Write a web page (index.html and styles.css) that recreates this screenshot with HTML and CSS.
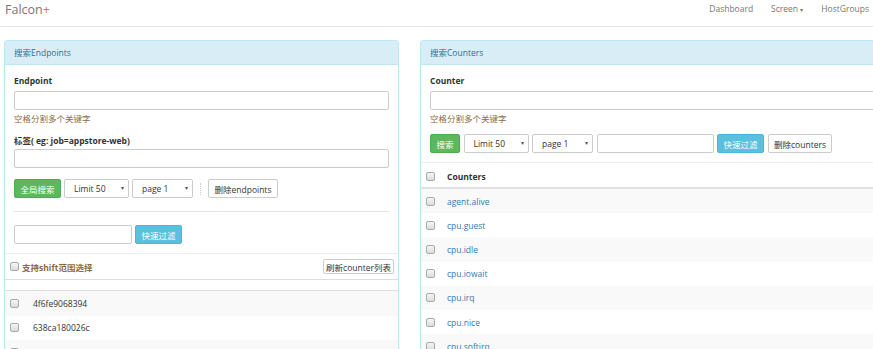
FILE: index.html
```
<!DOCTYPE html>
<html lang="zh">
<head>
    <meta charset="UTF-8">
    <title>Falcon+</title>
    <link rel="stylesheet" href="styles.css">
</head>
<body>
    <div class="navbar">
        <div class="brand">Falcon<span class="plus">+</span></div>
        <div class="nav-links">
            <a>Dashboard</a>
            <a>Screen <span class="caret">&#9662;</span></a>
            <a>HostGroups</a>
        </div>
    </div>

    <div class="main">
        <!-- endpoints -->
        <div class="panel panel-left">
            <div class="panel-heading">搜索Endpoints</div>
            <div class="panel-body">
                <div class="label">Endpoint</div>
                <div class="input"></div>
                <div class="help">空格分割多个关键字</div>
                <div class="label label-tag">标签( eg: job=appstore-web)</div>
                <div class="input"></div>
                <div class="btn-row">
                    <button class="btn btn-success">全局搜索</button>
                    <div class="select">Limit 50<span class="arrow">&#9662;</span></div>
                    <div class="select">page 1<span class="arrow">&#9662;</span></div>
                    <span class="sep"></span>
                    <button class="btn btn-default">删除endpoints</button>
                </div>
                <div class="hr"></div>
                <div class="btn-row">
                    <div class="input input-filter"></div>
                    <button class="btn btn-info">快速过滤</button>
                </div>
            </div>
            <div class="shift-row">
                <label class="shift-label"><span class="checkbox"></span>支持shift范围选择</label>
                <button class="btn btn-default btn-xs">刷新counter列表</button>
            </div>
            <div class="spacer-row"></div>
            <div class="list">
                <div class="row"><span class="checkbox"></span><span class="host">4f6fe9068394</span></div>
                <div class="row"><span class="checkbox"></span><span class="host">638ca180026c</span></div>
                <div class="row"><span class="checkbox"></span><span class="host"></span></div>
            </div>
        </div>

        <!-- counters -->
        <div class="panel panel-right">
            <div class="panel-heading">搜索Counters</div>
            <div class="panel-body">
                <div class="label">Counter</div>
                <div class="input"></div>
                <div class="help">空格分割多个关键字</div>
                <div class="btn-row btn-row-tight">
                    <button class="btn btn-success">搜索</button>
                    <div class="select">Limit 50<span class="arrow">&#9662;</span></div>
                    <div class="select">page 1<span class="arrow">&#9662;</span></div>
                    <div class="input input-counter"></div>
                    <button class="btn btn-info">快速过滤</button>
                    <button class="btn btn-default">删除counters</button>
                </div>
            </div>
            <div class="table-head"><span class="checkbox"></span><span class="th">Counters</span></div>
            <div class="list list-counters">
                <div class="row"><span class="checkbox"></span><a class="counter">agent.alive</a></div>
                <div class="row"><span class="checkbox"></span><a class="counter">cpu.guest</a></div>
                <div class="row"><span class="checkbox"></span><a class="counter">cpu.idle</a></div>
                <div class="row"><span class="checkbox"></span><a class="counter">cpu.iowait</a></div>
                <div class="row"><span class="checkbox"></span><a class="counter">cpu.irq</a></div>
                <div class="row"><span class="checkbox"></span><a class="counter">cpu.nice</a></div>
                <div class="row"><span class="checkbox"></span><a class="counter">cpu.softirq</a></div>
            </div>
        </div>
    </div>
</body>
</html>
```

FILE: styles.css
```
body {
    margin: 0;
    padding: 0;
    font-family: "Open Sans", "Noto Sans CJK SC", sans-serif;
    font-size: 8.5px;
    color: #333;
    background: #fff;
    overflow: hidden;
    width: 873px;
    height: 349px;
}

.navbar {
    height: 26px;
    border-bottom: 1px solid #e7e7e7;
    display: flex;
    justify-content: space-between;
    align-items: flex-start;
}

.brand {
    font-size: 12.5px;
    color: #777;
    padding: 2px 0 0 5px;
    line-height: 16px;
}

.brand .plus {
    color: #b5875a;
}

.nav-links {
    display: flex;
    gap: 18px;
    padding: 2px 4px 0 0;
    line-height: 14px;
}

.nav-links a {
    color: #777;
}

.nav-links .caret {
    font-size: 6px;
    vertical-align: middle;
}

.main {
    display: flex;
    gap: 21px;
    padding: 13px 0 0 4px;
}

.panel {
    border: 1px solid #bce8f1;
    border-radius: 3px;
    flex-shrink: 0;
    height: 330px;
}

.panel-left {
    width: 393px;
}

.panel-right {
    width: 480px;
}

.panel-heading {
    height: 23px;
    line-height: 23px;
    background: #d9edf7;
    color: #31708f;
    padding-left: 9px;
    border-bottom: 1px solid #bce8f1;
}

.panel-body {
    padding: 10px 9px 9px 9px;
    border-bottom: 1px solid #e8eef0;
}

.label {
    font-weight: bold;
    line-height: 12px;
    margin-bottom: 4px;
}

.label-tag {
    margin-top: 10px;
    margin-bottom: 2px;
}

.input {
    height: 17px;
    border: 1px solid #ccc;
    border-radius: 2px;
    background: #fff;
}

.help {
    color: #8a6d3b;
    line-height: 12px;
    margin-top: 3px;
}

.btn-row {
    display: flex;
    align-items: center;
    gap: 3px;
    margin-top: 11px;
}

.btn-row-tight {
    margin-top: 9px;
    gap: 3.5px;
}

.btn {
    font-family: inherit;
    font-size: 8.5px;
    height: 19px;
    padding: 0 5.5px;
    border-radius: 2px;
    border: 1px solid #ccc;
    background: #fff;
    color: #333;
    margin: 0;
}

.btn-success {
    background: #5cb85c;
    border-color: #4cae4c;
    color: #fff;
}

.btn-info {
    background: #5bc0de;
    border-color: #46b8da;
    color: #fff;
}

.select {
    height: 17px;
    line-height: 17px;
    border: 1px solid #ccc;
    border-radius: 2px;
    padding: 0 4px 0 9px;
    display: flex;
    justify-content: space-between;
    width: 50px;
}

.select .arrow {
    font-size: 6px;
    color: #555;
}

.panel-left .select + .select {
    width: 46px;
}

.panel-right .select + .select {
    width: 46px;
}

.sep {
    width: 0;
    height: 12px;
    border-left: 1px dotted #ccc;
    margin: 0 4px;
}

.hr {
    height: 1px;
    background: #e5e5e5;
    margin-top: 13px;
}

.btn-row .input-filter {
    width: 116px;
}

.hr + .btn-row {
    margin-top: 13px;
}

.input-counter {
    width: 115px;
}

.shift-row {
    height: 25px;
    display: flex;
    justify-content: space-between;
    align-items: center;
    padding: 0 4px 0 5px;
    border-bottom: 1px solid #ddd;
}

.shift-label {
    font-weight: bold;
    color: #8a6d3b;
    display: flex;
    align-items: center;
    gap: 3px;
}

.btn-xs {
    height: 15px;
    padding: 0 2px;
    border-radius: 2px;
}

.spacer-row {
    height: 10px;
    border-bottom: 1px solid #ddd;
}

.checkbox {
    display: inline-block;
    width: 7px;
    height: 7px;
    border: 1px solid #a9a9a9;
    border-radius: 2px;
    background: linear-gradient(#f6f6f6, #dcdcdc);
}

.list .row {
    height: 24.6px;
    display: flex;
    align-items: center;
    padding-left: 5px;
}

.list .row:nth-child(odd) {
    background: #f9f9f9;
}

.host {
    margin-left: 14px;
}

.table-head {
    height: 21px;
    padding-top: 3px;
    display: flex;
    align-items: center;
    padding-left: 5px;
    border-bottom: 2px solid #e0e0e0;
}

.table-head .th {
    font-weight: bold;
    margin-left: 12px;
}

.list-counters .row {
    height: 24.2px;
    padding-left: 5px;
}

.counter {
    color: #337ab7;
    margin-left: 12px;
}
```
